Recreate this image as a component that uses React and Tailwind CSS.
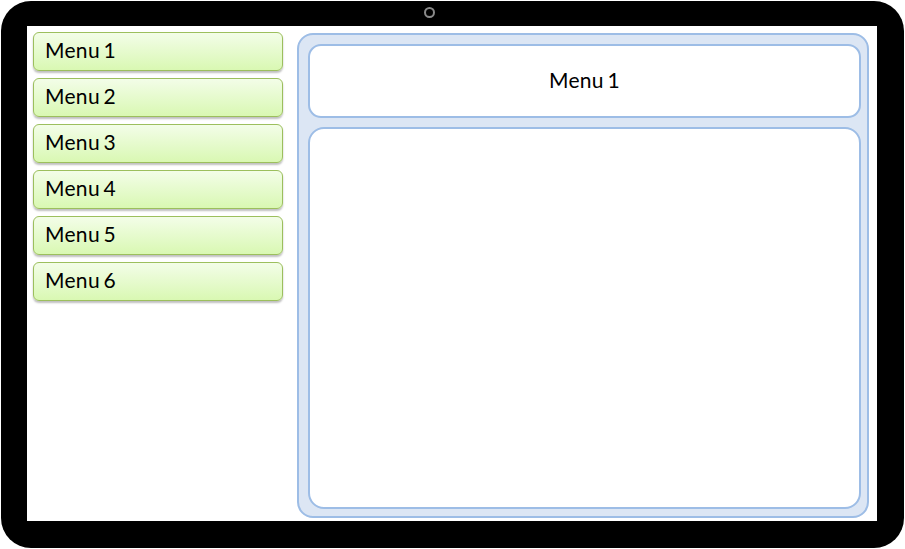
export default function App() {
  const menus = ["Menu 1", "Menu 2", "Menu 3", "Menu 4", "Menu 5", "Menu 6"];
  return (
    <div className="w-[905px] h-[549px] bg-white pl-[1px] pt-[1px]" style={{ fontFamily: "Lato, 'Open Sans', sans-serif" }}>
      <div className="w-[903px] h-[547px] bg-black rounded-[30px] flex flex-col px-[26px]">
        <div className="h-[25px] flex items-start pt-[6px] pl-[397px]">
          <div className="w-[11px] h-[11px] rounded-full border-[2.5px] border-[#8a8a8a]" />
        </div>
        <div className="w-[850px] h-[495px] bg-white flex items-start pl-[6px] pt-[6px] gap-[14px]">
          <div className="flex flex-col gap-[7px] w-[250px]">
            {menus.map((m) => (
              <div
                key={m}
                className="h-[39px] rounded-[6px] border border-[#9cbf5d] bg-gradient-to-b from-[#f3fde8] to-[#d9f8b2] shadow-[0_2px_2px_rgba(0,0,0,0.25)] flex items-center pl-[11px] pb-[3px] text-[21px] tracking-[0.3px] [word-spacing:-2px] text-black"
              >
                {m}
              </div>
            ))}
          </div>
          <div className="mt-[1px] w-[572px] h-[485px] rounded-[16px] border-[2px] border-[#9dbde6] bg-[#dce6f4] pl-[9px] pr-[6px] pt-[9px] pb-[7px] flex flex-col gap-[9px]">
            <div className="h-[74px] rounded-[13px] border-[2px] border-[#9dbde6] bg-white flex items-center justify-center pb-[2px] text-[21px] tracking-[0.3px] [word-spacing:-2px] text-black">
              Menu 1
            </div>
            <div className="flex-1 rounded-[16px] border-[2px] border-[#9dbde6] bg-white" />
          </div>
        </div>
      </div>
    </div>
  );
}
